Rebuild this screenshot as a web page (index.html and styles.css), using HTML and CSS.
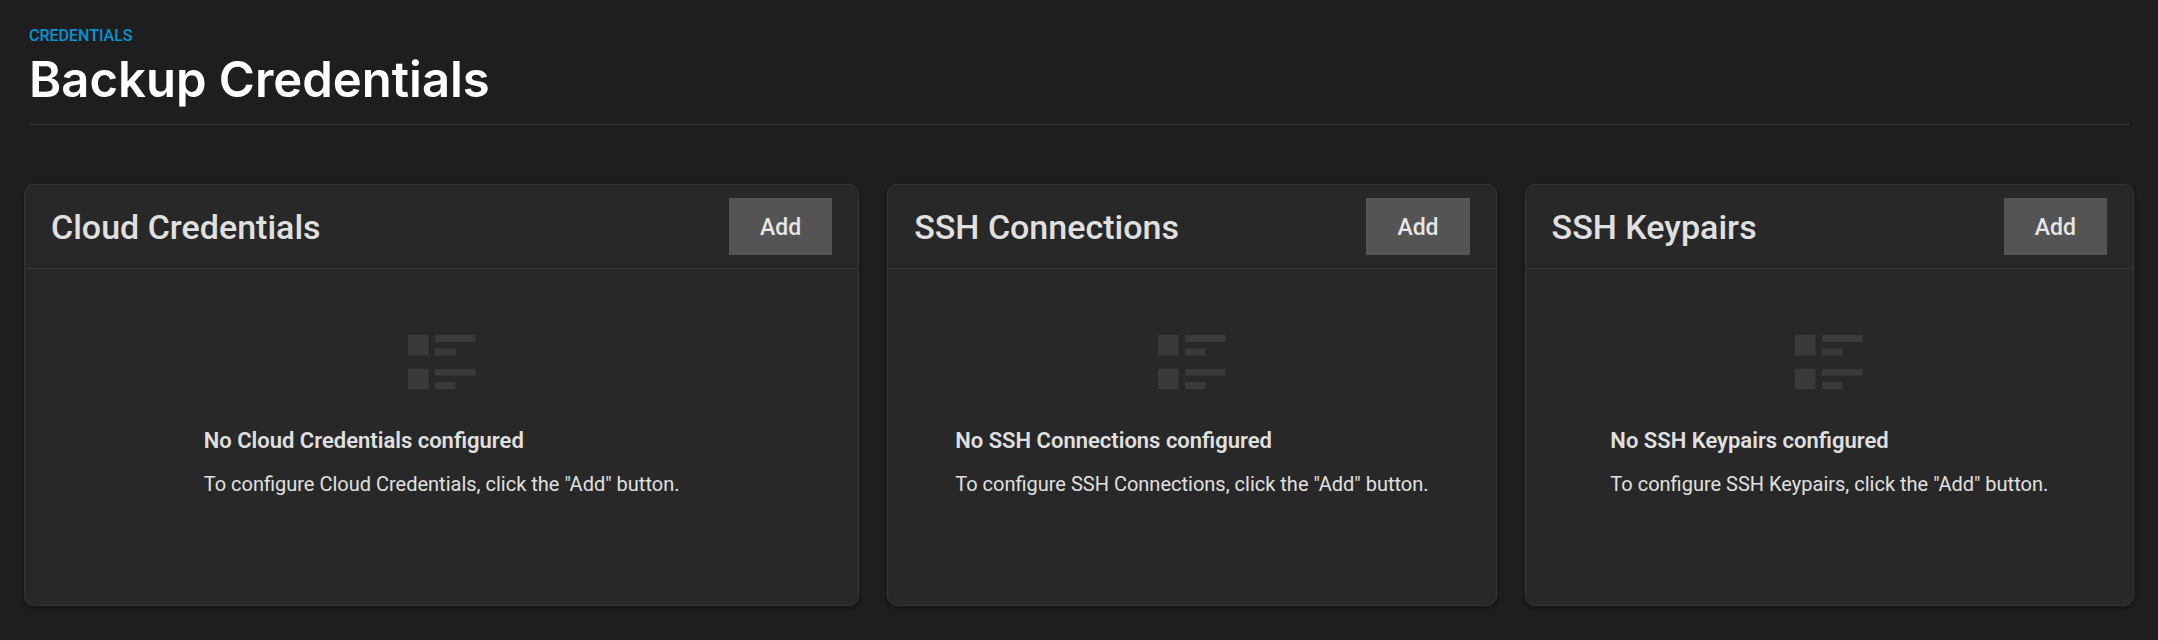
FILE: index.html
```html
<!DOCTYPE html>
<html lang="en">
<head>
<meta charset="utf-8">
<title>Backup Credentials</title>
<link rel="stylesheet" href="styles.css">
</head>
<body>
<svg class="symbols" aria-hidden="true">
  <symbol id="list-icon" viewBox="0 0 68 54">
    <path d="M0 0h20.500v20.500h-20.500zM27 0h40.500v7h-40.500zM27 13.500h20.500v7h-20.500zM0 33.800h20.500v20.200h-20.500zM27 34h40.500v6.500h-40.500zM27 47h20.500v7h-20.500z"/>
  </symbol>
</svg>
<header class="page-header">
  <nav><a class="breadcrumb" href="#">CREDENTIALS</a></nav>
  <h1 class="page-title">Backup Credentials</h1>
</header>
<main class="cards">
  <section class="card">
    <header class="card-header">
      <h2 class="card-title">Cloud Credentials</h2>
      <button class="add-button" type="button">Add</button>
    </header>
    <div class="empty">
      <div class="empty-content">
        <svg class="empty-icon" aria-hidden="true"><use href="#list-icon"/></svg>
        <h3 class="empty-title">No Cloud Credentials configured</h3>
        <p class="empty-text">To configure Cloud Credentials, click the "Add" button.</p>
      </div>
    </div>
  </section>
  <section class="card">
    <header class="card-header">
      <h2 class="card-title">SSH Connections</h2>
      <button class="add-button" type="button">Add</button>
    </header>
    <div class="empty">
      <div class="empty-content">
        <svg class="empty-icon" aria-hidden="true"><use href="#list-icon"/></svg>
        <h3 class="empty-title">No SSH Connections configured</h3>
        <p class="empty-text">To configure SSH Connections, click the "Add" button.</p>
      </div>
    </div>
  </section>
  <section class="card">
    <header class="card-header">
      <h2 class="card-title">SSH Keypairs</h2>
      <button class="add-button" type="button">Add</button>
    </header>
    <div class="empty">
      <div class="empty-content">
        <svg class="empty-icon" aria-hidden="true"><use href="#list-icon"/></svg>
        <h3 class="empty-title">No SSH Keypairs configured</h3>
        <p class="empty-text">To configure SSH Keypairs, click the "Add" button.</p>
      </div>
    </div>
  </section>
</main>
</body>
</html>
```
FILE: styles.css
```css
* {
  box-sizing: border-box;
}

body {
  margin: 0;
  padding: 24px;
  background: #1e1e1e;
  color: #e0e0e0;
  font-family: Roboto, "Open Sans", sans-serif;
}

h1, h2, h3, p {
  margin: 0;
}

.symbols {
  display: none;
}

.page-header {
  margin: 0 5px;
  padding-bottom: 12px;
  border-bottom: 1px solid #363636;
}

.page-header nav {
  display: flex;
}

.breadcrumb {
  color: #0095d5;
  font-size: 16px;
  font-weight: 500;
  line-height: 24px;
  text-decoration: none;
}

.page-title {
  color: #fff;
  font-family: Inter, sans-serif;
  font-size: 49px;
  font-weight: 600;
  line-height: 64px;
}

.cards {
  display: grid;
  grid-template-columns: 37fr 27fr 27fr;
  gap: 28px;
  margin-top: 59px;
}

.card {
  background: #282828;
  border: 1px solid #363636;
  border-radius: 10px;
  box-shadow: 0 2px 4px rgba(0, 0, 0, 0.35);
}

.card-header {
  display: flex;
  align-items: center;
  justify-content: space-between;
  padding: 13px 26px;
  border-bottom: 1px solid #363636;
}

.card-title {
  font-size: 34px;
  font-weight: 500;
  line-height: 44px;
}

.add-button {
  padding: 15px 31px 13px;
  border: 0;
  background: #545454;
  color: #e6e6e6;
  font-family: inherit;
  font-size: 23px;
  font-weight: 500;
  line-height: 29px;
}

.empty {
  display: flex;
  justify-content: center;
  padding: 66px 24px 106px;
}

.empty-icon {
  display: block;
  width: 68px;
  height: 54px;
  margin: 0 auto 36px;
  fill: #3a3a3a;
}

.empty-title {
  font-size: 22px;
  font-weight: 600;
  line-height: 32px;
}

.empty-text {
  margin-top: 12px;
  font-size: 20px;
  line-height: 30px;
}
```
